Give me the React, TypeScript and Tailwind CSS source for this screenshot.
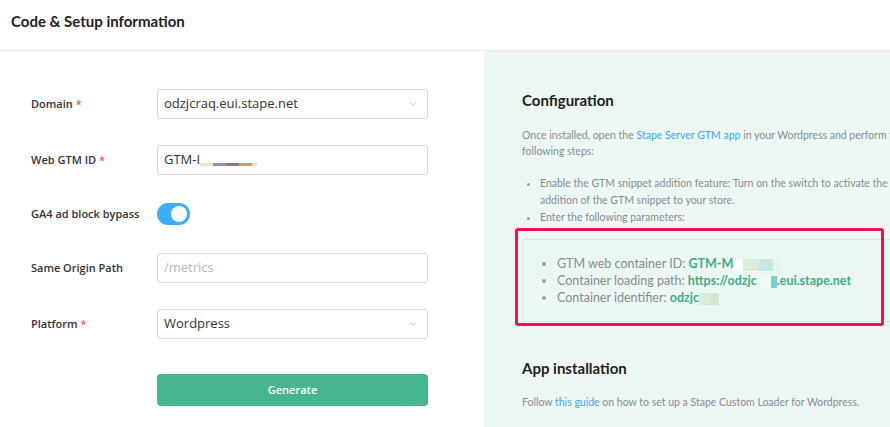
import { ChevronDown } from 'lucide-react';

const font = { fontFamily: '"Open Sans", "Noto Sans", sans-serif' };
const narrow = { fontFamily: 'Lato, "Open Sans", sans-serif' };

function Label({ text, required }: { text: string; required?: boolean }) {
  return (
    <span className="w-[126px] shrink-0 text-[11px] font-semibold text-[#333333]">
      {text}
      {required && <span className="ml-[3px] text-[#f05a5a]">*</span>}
    </span>
  );
}

function Row({ children, label, required }: { children: React.ReactNode; label: string; required?: boolean }) {
  return (
    <div className="flex items-center">
      <Label text={label} required={required} />
      <div className="w-[271px]">{children}</div>
    </div>
  );
}

function Blur({ parts }: { parts: { w: string; c: string }[] }) {
  return (
    <span className="inline-flex items-end h-[12px] align-middle">
      {parts.map((p, i) => (
        <span key={i} className={`${p.w} ${p.c} h-[12px] opacity-80`} />
      ))}
    </span>
  );
}

export default function App() {
  return (
    <div className="w-[890px] h-[427px] overflow-hidden bg-white flex flex-col" style={font}>
      {/* header */}
      <header className="h-[51px] shrink-0 border-b border-[#e9e9e9] flex items-center px-[11px]">
        <h1 className="text-[15px] font-bold text-[#222222] -mt-[7px]" style={narrow}>Code &amp; Setup information</h1>
      </header>

      <div className="flex flex-1 min-h-0">
        {/* form column */}
        <div className="w-[484px] shrink-0 pl-[31px] pt-[38px] flex flex-col gap-[26px]">
          <Row label="Domain" required>
            <div className="h-[30px] border border-[#d4d7dc] rounded-[3px] flex items-center justify-between pl-[6px] pr-[9px] text-[13px] text-[#333333]">
              <span>odzjcraq.eui.stape.net</span>
              <ChevronDown className="w-[10px] h-[10px] text-[#9aa0a6]" strokeWidth={1.5} />
            </div>
          </Row>
          <Row label="Web GTM ID" required>
            <div className="h-[30px] border border-[#d4d7dc] rounded-[3px] flex items-center pl-[6px] text-[13px] text-[#333333]">
              <span>GTM-I</span>
              <span className="flex h-[3px] mt-[9px]">
                <span className="w-[13px] bg-[#ece4c0]" />
                <span className="w-[13px] bg-[#7f9ab3]" />
                <span className="w-[13px] bg-[#9a7468]" />
                <span className="w-[13px] bg-[#c9a16e]" />
                <span className="w-[5px] bg-[#e0dfe6]" />
              </span>
            </div>
          </Row>
          <Row label="GA4 ad block bypass">
            <div className="h-[26px] flex items-center">
              <div className="w-[33px] h-[22px] rounded-full bg-[#3cadf6] flex items-center justify-end pr-[3px]">
                <div className="w-[16px] h-[16px] rounded-full bg-white" />
              </div>
            </div>
          </Row>
          <Row label="Same Origin Path">
            <div className="h-[30px] border border-[#d4d7dc] rounded-[3px] flex items-center pl-[6px] text-[13px] text-[#b5b8bd]">
              /metrics
            </div>
          </Row>
          <Row label="Platform" required>
            <div className="h-[30px] border border-[#d4d7dc] rounded-[3px] flex items-center justify-between pl-[6px] pr-[9px] text-[13px] text-[#333333]">
              <span>Wordpress</span>
              <ChevronDown className="w-[10px] h-[10px] text-[#9aa0a6]" strokeWidth={1.5} />
            </div>
          </Row>
          <div className="pl-[126px] mt-[9px]">
            <button className="w-[271px] h-[32px] rounded-[4px] bg-[#46b68e] text-white text-[11px] font-semibold">
              Generate
            </button>
          </div>
        </div>

        {/* instructions column */}
        <div className="w-[430px] shrink-0 bg-[#edf8f4] pl-[38px] pr-[4px] pt-[38px] text-[#878c91]" style={narrow}>
          <h2 className="text-[15px] font-bold text-[#222222] leading-[22px]">Configuration</h2>
          <p className="mt-[16px] text-[10.5px] leading-[16px]">
            Once installed, open the <span className="text-[#3ba7ee]">Stape Server GTM app</span> in your Wordpress and perform the following steps:
          </p>
          <ul className="mt-[16px] text-[10.5px] leading-[17px] list-disc pl-[18px] marker:text-[#9a9fa4]">
            <li>Enable the GTM snippet addition feature: Turn on the switch to activate the addition of the GTM snippet to your store.</li>
            <li>Enter the following parameters:</li>
          </ul>

          <div className="relative mt-[13px]">
            <div className="h-[83px] border border-[#d2ebe1] rounded-[3px] bg-[#eaf7f2] pl-[20px] flex items-center">
              <ul className="text-[12.5px] leading-[17px] list-disc pl-[14px] text-[#878c91] marker:text-[#9a9fa4]">
                <li>
                  GTM web container ID: <span className="font-bold text-[#3fae87]">GTM-M</span>
                  <Blur parts={[{ w: 'w-[10px]', c: 'bg-white' }, { w: 'w-[16px]', c: 'bg-[#d5e8d0]' }, { w: 'w-[14px]', c: 'bg-[#b6e3e3]' }, { w: 'w-[6px]', c: 'bg-[#e3f1ec]' }]} />
                </li>
                <li>
                  Container loading path: <span className="font-bold text-[#3fae87]">https://odzjc</span>
                  <Blur parts={[{ w: 'w-[14px]', c: 'bg-[#f4faf8]' }, { w: 'w-[6px]', c: 'bg-[#5cc8c8]' }]} />
                  <span className="font-bold text-[#3fae87]">.eui.stape.net</span>
                </li>
                <li>
                  Container identifier: <span className="font-bold text-[#3fae87]">odzjc</span>
                  <Blur parts={[{ w: 'w-[12px]', c: 'bg-[#d5e8d0]' }, { w: 'w-[8px]', c: 'bg-[#c9e2c4]' }]} />
                </li>
              </ul>
            </div>
            {/* annotation overlay */}
            <div className="absolute -left-[7px] -top-[11px] w-[369px] h-[98px] border-[3px] border-[#ff0a57] rounded-[3px] pointer-events-none" />
          </div>

          <h2 className="mt-[35px] text-[15px] font-bold text-[#222222] leading-[22px]">App installation</h2>
          <p className="mt-[15px] text-[10.5px] leading-[16px]">
            Follow <span className="text-[#3ba7ee]">this guide</span> on how to set up a Stape Custom Loader for Wordpress.
          </p>
        </div>
      </div>
    </div>
  );
}
